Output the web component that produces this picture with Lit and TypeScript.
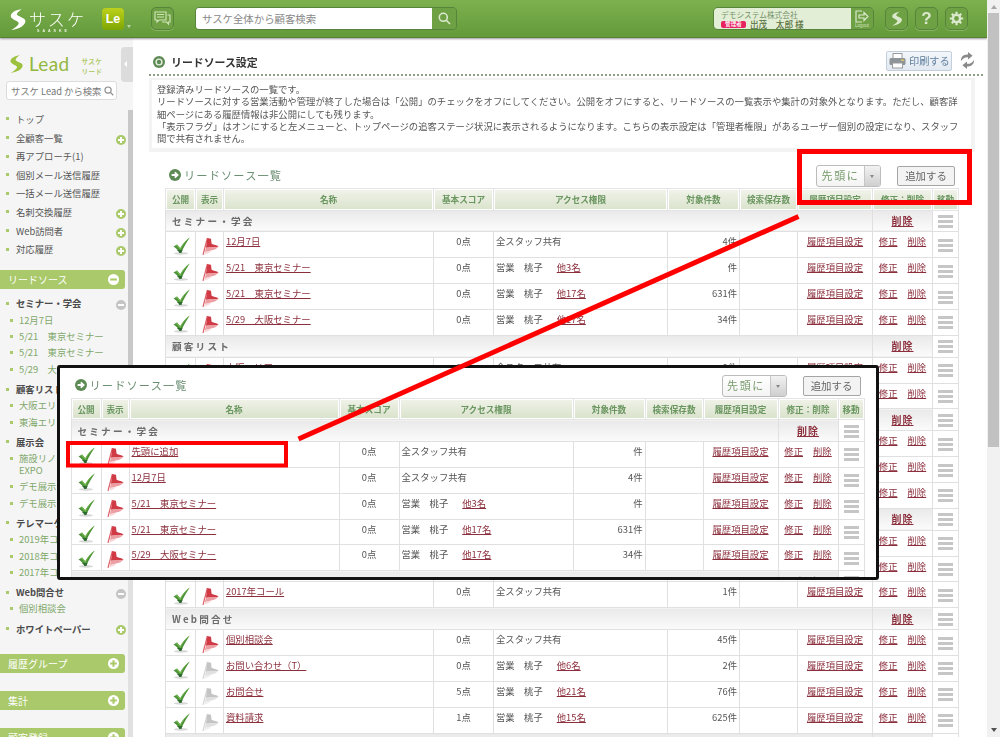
import { LitElement, html, svg, css, nothing } from "lit";
import { customElement, property } from "lit/decorators.js";

const FONT = css`"Noto Sans CJK JP", "Liberation Sans", sans-serif`;

type Row = { name: string; score: string; staff: string; more?: string; count: string; off?: boolean };
type Group = { title: string; rows: Row[] };

const ALL = "全スタッフ共有";
const SALES = "営業　桃子";

const seminar: Row[] = [
  { name: "12月7日", score: "0点", staff: ALL, count: "4件" },
  { name: "5/21　東京セミナー", score: "0点", staff: SALES, more: "他3名", count: "件" },
  { name: "5/21　東京セミナー", score: "0点", staff: SALES, more: "他17名", count: "631件" },
  { name: "5/29　大阪セミナー", score: "0点", staff: SALES, more: "他17名", count: "34件" },
];

const MAIN_GROUPS: Group[] = [
  { title: "セミナー・学会", rows: seminar },
  {
    title: "顧客リスト",
    rows: [
      { name: "大阪エリア", score: "0点", staff: ALL, count: "0件" },
      { name: "東海エリア", score: "0点", staff: ALL, count: "0件" },
    ],
  },
  {
    title: "展示会",
    rows: [
      { name: "施設リノベーションEXPO", score: "0点", staff: ALL, count: "0件" },
      { name: "デモ展示会", score: "0点", staff: ALL, count: "0件" },
      { name: "デモ展示会", score: "0点", staff: ALL, count: "0件" },
    ],
  },
  {
    title: "テレマーケティング",
    rows: [
      { name: "2019年コール", score: "0点", staff: ALL, count: "0件" },
      { name: "2018年コール", score: "0点", staff: ALL, count: "0件" },
      { name: "2017年コール", score: "0点", staff: ALL, count: "1件" },
    ],
  },
  {
    title: "Web問合せ",
    rows: [
      { name: "個別相談会", score: "0点", staff: ALL, count: "45件" },
      { name: "お問い合わせ（T）", score: "0点", staff: SALES, more: "他6名", count: "2件", off: true },
      { name: "お問合せ", score: "5点", staff: SALES, more: "他21名", count: "76件", off: true },
      { name: "資料請求", score: "1点", staff: SALES, more: "他15名", count: "625件", off: true },
    ],
  },
  { title: "ホワイトペーパー", rows: [] },
];

const INSET_GROUPS: Group[] = [
  {
    title: "セミナー・学会",
    rows: [{ name: "先頭に追加", score: "0点", staff: ALL, count: "件" }, ...seminar],
  },
  { title: "顧客リスト", rows: [] },
];

const checkIcon = html`<svg class="check" width="18" height="18" viewBox="0 0 18 18">
  <ellipse cx="8" cy="16.4" rx="7" ry="1.3" fill="#c6c6c6" opacity=".7"></ellipse>
  <path d="M0.5 9.5 L4 7.6 L7.3 11.2 C9.5 7.3 12.6 3.4 16.8 0.6 C13.4 5.4 10.6 10.4 8.2 16 L6.6 16 C5 13.2 3 11.2 0.5 9.5 Z" fill="#4c9139"></path>
  <path d="M3 8.4 L4 7.6 L7.3 11.2 C9.5 7.3 12.6 3.4 16.8 0.6 C13 4 10 8 7.4 13 Z" fill="#74b84f"></path>
  <path d="M3.6 13 C5 13.6 6 14.6 6.6 16 L8.2 16 C8.6 15 9 14 9.5 13 Z" fill="#2c6a30"></path>
</svg>`;

const flag = (off?: boolean) => {
  const a = off ? "#c4c4c4" : "#cf3a44";
  const b = off ? "#e0e0e0" : "#ec9ea3";
  const c = off ? "#efefef" : "#f8dadb";
  return html`<svg class="flag" width="18" height="19" viewBox="0 0 18 19">
    <path d="M5.4 1 L1 17.8" stroke="${off ? "#d4d4d4" : "#dc5c64"}" stroke-width="1.2" fill="none"></path>
    <path d="M5.4 1 C6.8 1.5 8.2 1.2 9 2 L9.6 6.8 C11.8 7.8 14.6 8 16.6 9.6 C14 10.4 10.6 10.8 7.4 10.4 L3.9 10.8 Z" fill="${a}"></path>
    <path d="M3.9 10.8 L7.4 10.4 C10.6 10.8 14 10.4 16.6 9.6 C15 12 12 13 9 13.4 C7 14.4 4.6 14.6 2.9 15 Z" fill="${b}"></path>
    <path d="M2.9 15 C5 14.6 7 14.4 9 13.4 C9 15 6 16.6 2.2 17.4 Z" fill="${c}"></path>
  </svg>`;
};

const handleIcon = html`<span class="handle"><i></i><i></i><i></i></span>`;

@customElement("lead-list")
class LeadList extends LitElement {
  @property({ type: Array }) groups: Group[] = [];

  static styles = css`
    :host { display: block; width: 793px; font: 9.35px/12px ${FONT}; color: #555; }
    .head { display: flex; align-items: center; height: 24px; }
    .arrow { width: 12px; height: 12px; margin: -2px 0 0 4px; flex: none; }
    .title { margin: -2px 0 0 3px; font-size: 11.2px; letter-spacing: 1.15px; color: #6b8f72; white-space: nowrap; }
    .select { margin-left: auto; display: flex; width: 65px; height: 22px; box-sizing: border-box;
      border: 1px solid #bcbcbc; border-radius: 3px; background: linear-gradient(#fff, #f4f4f4); overflow: hidden; }
    .select b { flex: 1; font-weight: 400; font-size: 11px; letter-spacing: 1.6px; line-height: 19px; text-align: center; color: #769a6a; }
    .select span { width: 15px; background: linear-gradient(#f2f2f2, #cfcfcf); border-left: 1px solid #c6c6c6; position: relative; }
    .select span::after { content: ""; position: absolute; left: 5px; top: 9px; border: 2.5px solid transparent; border-top: 3.5px solid #888; }
    .add { margin-left: 16px; margin-right: 3px; width: 58px; height: 20px; box-sizing: border-box; border: 1px solid #a5a5a5;
      border-radius: 2px; background: #f3f3f3; text-align: center; line-height: 18px; font-size: 10.4px; color: #666; }
    table { border-collapse: collapse; table-layout: fixed; width: 793px; }
    th { height: 21.6px; padding: 0; font-size: 8.6px; font-weight: 700; color: #6a9660; text-align: center; box-sizing: border-box;
      border: 1px solid #e4e4e4; box-shadow: inset 0 0 0 1px #fff;
      background: linear-gradient(#f1f3ea, #d9e2cb); }
    td { border: 1px solid #e0e0e0; padding: 0; box-sizing: border-box; vertical-align: top; background: #fff; }
    .row td { height: 25.85px; padding-top: 3px; line-height: 12px; }
    .row .ic { padding: 5px 0 0 2px; text-align: center; }
    .ic svg { display: block; margin: 0 auto; }
    .row .name { padding-left: 2px; white-space: nowrap; overflow: hidden; }
    .score { text-align: center; }
    .row .staff { padding-left: 2px; white-space: nowrap; }
    .staff a { margin-left: 14px; }
    .row .count { text-align: right; padding-right: 2px; }
    .row .mid { text-align: center; }
    .row .ops { text-align: center; white-space: nowrap; }
    .ops a + a { margin-left: 10px; }
    a { color: #8c2f3c; text-decoration: underline; }
    .grp td { height: 21.9px; background: linear-gradient(#e9e9e9, #fbfbfb); vertical-align: middle; }
    .grp .gt { padding-left: 6px; font-size: 9.6px; font-weight: 700; letter-spacing: 2.2px; color: #6b6b6b; border-right: none; }
    .grp .gd { text-align: center; font-size: 10px; font-weight: 700; letter-spacing: 1px; }
    .grp .gm, .row .gm { background: #fff; padding: 0; vertical-align: middle; text-align: center; }
    .handle { display: inline-flex; flex-direction: column; gap: 2px; width: 15px; vertical-align: middle; }
    .handle i { display: block; height: 3px; background: #c6c6c6; }
  `;

  render() {
    return html`
      <div class="head">
        <svg class="arrow" viewBox="0 0 12 12">
          <circle cx="6" cy="6" r="6" fill="#5e8b55"></circle>
          <path d="M2.6 6 H8 M5.8 3.4 L8.6 6 L5.8 8.6" stroke="#fff" stroke-width="1.8" fill="none"></path>
        </svg>
        <span class="title">リードソース一覧</span>
        <div class="select"><b>先頭に</b><span></span></div>
        <div class="add">追加する</div>
      </div>
      <table>
        <colgroup>
          <col style="width:30px" /><col style="width:28px" /><col style="width:210px" /><col style="width:60px" />
          <col style="width:174px" /><col style="width:72px" /><col style="width:58px" /><col style="width:75px" />
          <col style="width:60px" /><col style="width:26px" />
        </colgroup>
        <thead>
          <tr>
            <th>公開</th><th>表示</th><th>名称</th><th>基本スコア</th><th>アクセス権限</th>
            <th>対象件数</th><th>検索保存数</th><th>履歴項目設定</th><th>修正：削除</th><th>移動</th>
          </tr>
        </thead>
        <tbody>
          ${this.groups.map(
            (g) => html`
              <tr class="grp">
                <td class="gt" colspan="8">${g.title}</td>
                <td class="gd"><a>削除</a></td>
                <td class="gm">${handleIcon}</td>
              </tr>
              ${g.rows.map(
                (r) => html`
                  <tr class="row">
                    <td class="ic">${checkIcon}</td>
                    <td class="ic">${flag(r.off)}</td>
                    <td class="name"><a>${r.name}</a></td>
                    <td class="score">${r.score}</td>
                    <td class="staff">${r.staff}${r.more ? html`<a>${r.more}</a>` : nothing}</td>
                    <td class="count">${r.count}</td>
                    <td></td>
                    <td class="mid"><a>履歴項目設定</a></td>
                    <td class="ops"><a>修正</a><a>削除</a></td>
                    <td class="gm">${handleIcon}</td>
                  </tr>
                `
              )}
            `
          )}
        </tbody>
      </table>
    `;
  }
}

type Nav = { label: string; icon?: "plus" | "minus"; kids?: string[] };

const TOP_NAV: Nav[] = [
  { label: "トップ" },
  { label: "全顧客一覧", icon: "plus" },
  { label: "再アプローチ(1)" },
  { label: "個別メール送信履歴" },
  { label: "一括メール送信履歴" },
  { label: "名刺交換履歴", icon: "plus" },
  { label: "Web訪問者", icon: "plus" },
  { label: "対応履歴", icon: "plus" },
];

const LEAD_NAV: Nav[] = [
  { label: "セミナー・学会", icon: "minus", kids: ["12月7日", "5/21　東京セミナー", "5/21　東京セミナー", "5/29　大阪セミナー"] },
  { label: "顧客リスト", kids: ["大阪エリア", "東海エリア"] },
  { label: "展示会", kids: ["施設リノベーション EXPO", "デモ展示会", "デモ展示会"] },
  { label: "テレマーケティング", kids: ["2019年コール", "2018年コール", "2017年コール"] },
  { label: "Web問合せ", icon: "minus", kids: ["個別相談会"] },
  { label: "ホワイトペーパー", icon: "plus" },
];

const sign = (kind: "plus" | "minus", fill: string, mark: string, size = 10) => html`<svg
  class="sign" width="${size}" height="${size}" viewBox="0 0 10 10">
  <circle cx="5" cy="5" r="5" fill="${fill}"></circle>
  <path d="${kind === "plus" ? "M2 5 H8 M5 2 V8" : "M2 5 H8"}" stroke="${mark}" stroke-width="1.9"></path>
</svg>`;

const swoosh = (fill: string) => svg`<path
  d="M13 0 C7 1 2.5 3 1.8 6.6 C1.2 10 7.4 11.4 9.4 13.4 C10.6 14.8 7 18.6 2 21 C9 20.4 16 17 16.4 12.2 C16.6 8.8 9.4 7.8 8 5.8 C7.4 4.4 9.6 2.2 13 0 Z"
  fill="${fill}"></path>`;

@customElement("app-root")
class AppRoot extends LitElement {
  static styles = css`
    :host { display: block; position: relative; width: 1000px; height: 737px; overflow: hidden; font: 9.35px/12px ${FONT}; color: #555; background: #fff; }
    * { box-sizing: border-box; }
    .shell { display: flex; height: 737px; filter: blur(.3px); }
    .page { width: 987px; flex: none; display: flex; flex-direction: column; height: 737px; overflow: hidden; }
    .scroll { flex: 1; background: #f1f1f1; display: flex; flex-direction: column; align-items: center; padding-top: 3px; }
    .scroll .up { border: 3.5px solid transparent; border-bottom: 4px solid #a6a6a6; border-top: 0; margin-top: 2px; }
    .scroll .thumb { width: 11px; height: 434px; margin-top: 4px; background: #c1c1c1; }
    .scroll .down { border: 3.5px solid transparent; border-top: 4px solid #505050; border-bottom: 0; margin-top: auto; margin-bottom: 5px; }

    header { height: 38px; flex: none; display: flex; align-items: flex-start; padding-top: 7px; position: relative;
      background: linear-gradient(#7db04f, #649a3a); border-bottom: 1px solid #577f38; box-shadow: 0 1px 2px #9b9b9b; z-index: 2; }
    .logo { width: 102px; height: 30px; position: relative; flex: none; padding-left: 9px; display: flex; }
    .logo svg { margin-top: 2px; }
    .logo b { position: absolute; left: 29px; top: 0; font-weight: 300; font-size: 17px; line-height: 24px; letter-spacing: 2.2px; color: #fff; }
    .logo i { position: absolute; left: 37px; top: 22px; font: 700 3.6px/5px "Liberation Sans", sans-serif; letter-spacing: 3px; color: #eef5e4; }
    .le { width: 22px; height: 22px; margin-top: 1px; border-radius: 4px; background: linear-gradient(#bdd11c, #7da602); color: #fff; font: 700 12.5px/22px "Liberation Sans", sans-serif; text-align: center; flex: none; }
    .caret { width: 0; height: 0; margin: 18px 0 0 3px; border: 2.5px solid transparent; border-top: 3px solid #bcd6a0; flex: none; }
    .hbtn { width: 23px; height: 23px; border: 1px solid #55843a; border-radius: 5px; background: #6ea044; display: flex; align-items: center; justify-content: center; flex: none; box-shadow: 0 1px 0 #86b461; }
    .chat { margin-left: 20px; }
    .search { margin-left: 21px; width: 262px; height: 23px; display: flex; border-radius: 4px; border: 1px solid #55843a; overflow: hidden; flex: none; }
    .search span { width: 236px; background: #fff; font-size: 10.4px; line-height: 21px; padding-left: 6px; color: #888; }
    .search div { flex: 1; background: #6ea044; display: flex; align-items: center; justify-content: center; }
    .user { margin-left: auto; width: 161px; height: 23px; display: flex; border: 1px solid #55843a; border-radius: 5px; overflow: hidden; flex: none; }
    .ubox { width: 137px; background: #e3eed6; padding: 2px 0 0 7px; font-size: 7.7px; line-height: 9px; color: #76936a; white-space: nowrap; }
    .uname { display: flex; align-items: center; font-size: 8.6px; font-weight: 500; color: #5a7340; margin-top: 1px; }
    .badge { width: 25px; height: 7px; background: #e8225f; border-radius: 2px; color: #fff; font-size: 5.6px; line-height: 7px; text-align: center; margin-right: 4px; }
    .logout { flex: 1; background: #6ea044; display: flex; flex-direction: column; align-items: center; color: #cfe3bb; font: 4.6px/5px "Liberation Sans", sans-serif; padding-top: 2px; }
    .tools { margin-left: 11px; margin-right: 19px; display: flex; gap: 7px; }
    .q { color: #dbe9cd; font: 700 17px/21px "Liberation Sans", sans-serif; }

    .body { flex: 1; display: flex; min-height: 0; }
    aside { width: 133px; flex: none; display: flex; background: #f5f5f5; position: relative; }
    .tab { position: absolute; left: 121px; top: 9px; width: 12px; height: 35px; background: #dcdcdc; border-radius: 4px 0 0 4px; }
    .tab::after { content: ""; position: absolute; left: 3px; top: 14px; border: 3px solid transparent; border-right: 3px solid #fff; border-left: 0; }
    .strip { width: 5px; flex: none; margin-top: 72px; background: linear-gradient(#c8c8c8 0 60%, #e1e1e1 60%); }
    .side { flex: 1; min-width: 0; white-space: nowrap; }
    .brand { height: 43px; padding: 17px 0 0 9px; display: flex; position: relative; }
    .brand b { font: 400 19px/22px "Lato", "Liberation Sans", sans-serif; color: #93b83e; margin-left: 5px; margin-top: -2px; letter-spacing: .3px; }
    .brand small { font-size: 6.6px; line-height: 10px; font-weight: 700; color: #b4cc70; margin-left: 12px; margin-top: 1px; text-align: center; letter-spacing: .4px; }
    .sbox { margin-left: 6px; width: 111px; height: 19px; background: #fff; border: 1px solid #dcdcdc; border-radius: 3px; display: flex; align-items: center; padding: 0 2px 0 4px; font-size: 9.35px; color: #777; }
    .sbox svg { margin-left: auto; flex: none; }
    nav { margin-top: 9.7px; }
    .it { height: 18.6px; display: flex; align-items: center; padding-left: 6px; padding-right: 2px; color: #555; }
    .it::before, .kid::before { content: ""; width: 3px; height: 3px; background: #a9c96a; flex: none; margin-right: 7px; }
    .sign { margin-left: auto; margin-top: 4px; flex: none; }
    .bar { width: 125px; height: 19px; background: #a9c96a; border-radius: 0 3px 3px 0; display: flex; align-items: center; padding: 0 6px 0 8px; color: #fff; font-size: 10px; }
    .bar .sign { margin-top: 0; }
    .bar.first { margin-top: 12px; }
    .bar.next { margin-top: 18px; }
    .lead { padding-top: 6px; padding-bottom: 13.5px; }
    .grp { margin-bottom: 4px; }
    .grp .it { height: 16px; font-weight: 700; color: #4a4a4a; }
    .grp .it .sign { margin-top: 3px; }
    .kid { min-height: 16.4px; display: flex; align-items: center; padding: 2.2px 0 2.2px 10px; color: #7fa86a; white-space: normal; line-height: 12px; }
    .kid::before { margin-right: 6px; align-self: flex-start; margin-top: 5px; }

    main { flex: 1; min-width: 0; padding: 0 4px 0 16px; overflow: hidden; }
    .ptitle { height: 38px; display: flex; align-items: center; padding: 12px 0 0 4px; border-bottom: 2px dotted #8da083; }
    .ptitle svg.dot { flex: none; }
    .ptitle b { font-size: 10.9px; font-weight: 700; color: #333; margin-left: 6px; }
    .print { margin-left: auto; width: 66px; height: 20px; margin-top: -3px; border: 1px solid #c3cfdb; border-radius: 2px; background: linear-gradient(#f3f7fb, #e2e9f1); display: flex; align-items: center; padding-left: 2px; font-size: 10.2px; color: #5f7f9d; white-space: nowrap; }
    .print svg { flex: none; margin-right: 3px; }
    .refresh { margin: -3px 8px 0 8px; flex: none; }
    .note { width: 826px; margin-top: 2px; padding: 2px 4px 4px 3px; background: #f3f3f3; }
    .note div { background: #fff; padding: 3px 4px 3px 5px; line-height: 12.35px; font-size: 9.35px; color: #555; white-space: nowrap; height: 68px; }
    .listwrap { margin: 12px 0 0 16px; }

    .inset { position: absolute; left: 57px; top: 365px; width: 822px; height: 215px; background: #fff; border: 3px solid #111; border-radius: 3px; overflow: hidden; padding: 5.5px 0 0 10.5px; filter: blur(.3px); }
    .marks { position: absolute; left: 0; top: 0; pointer-events: none; }
  `;

  render() {
    return html`
      <div class="shell">
        <div class="page">
          <header>
            <div class="logo">
              <svg width="18" height="22" viewBox="0 0 18 22">${swoosh("#fff")}</svg>
              <b>サスケ</b><i>SAASKE</i>
            </div>
            <div class="le">Le</div>
            <span class="caret"></span>
            <div class="hbtn chat">
              <svg width="17" height="15" viewBox="0 0 17 15" fill="none" stroke="#cfe3b5" stroke-width="1.2">
                <path d="M1 1 H12 V9 H5 L3 11 V9 H1 Z"></path>
                <path d="M3 3.5 H10 M3 6 H10"></path>
                <path d="M13.5 4 H16 V11 H14.5 V13 L12.5 11 H8"></path>
              </svg>
            </div>
            <div class="search">
              <span>サスケ全体から顧客検索</span>
              <div>
                <svg width="13" height="13" viewBox="0 0 13 13" fill="none" stroke="#dbe9cd" stroke-width="1.6">
                  <circle cx="5.3" cy="5.3" r="4"></circle><path d="M8.3 8.3 L12 12"></path>
                </svg>
              </div>
            </div>
            <div class="user">
              <div class="ubox">
                デモシステム株式会社
                <div class="uname"><span class="badge">管理者</span>出茂　太郎 様</div>
              </div>
              <div class="logout">
                <svg width="14" height="13" viewBox="0 0 14 13" fill="none" stroke="#dbe9cd" stroke-width="1.2">
                  <path d="M7 1 H1 V12 H7"></path><path d="M4 5 H9 V2.5 L13 6.5 L9 10.5 V8 H4 Z"></path>
                </svg>
                Logout
              </div>
            </div>
            <div class="tools">
              <div class="hbtn"><svg width="12" height="16" viewBox="0 0 18 22">${swoosh("#dbe9cd")}</svg></div>
              <div class="hbtn"><span class="q">?</span></div>
              <div class="hbtn">
                <svg width="15" height="15" viewBox="0 0 15 15">
                  <circle cx="7.5" cy="7.5" r="3.6" fill="none" stroke="#dbe9cd" stroke-width="2.4"></circle>
                  <path d="M7.5 0.8 V3 M7.5 12 V14.2 M0.8 7.5 H3 M12 7.5 H14.2 M2.8 2.8 L4.4 4.4 M10.6 10.6 L12.2 12.2 M2.8 12.2 L4.4 10.6 M10.6 4.4 L12.2 2.8" stroke="#dbe9cd" stroke-width="2.2"></path>
                </svg>
              </div>
            </div>
          </header>
          <div class="body">
            <aside>
              <div class="side">
                <div class="brand">
                  <svg width="15" height="19" viewBox="0 0 18 22">${swoosh("#9cc13f")}</svg>
                  <b>Lead</b>
                  <small>サスケ<br />リード</small>
                </div>
                <div class="sbox">
                  サスケ Lead から検索
                  <svg width="10" height="10" viewBox="0 0 13 13" fill="none" stroke="#888" stroke-width="1.5">
                    <circle cx="5.3" cy="5.3" r="4"></circle><path d="M8.3 8.3 L12 12"></path>
                  </svg>
                </div>
                <nav>
                  ${TOP_NAV.map((n) => html`<div class="it">${n.label}${n.icon ? sign(n.icon, "#a9c96a", "#fff") : nothing}</div>`)}
                </nav>
                <div class="bar first">リードソース${sign("minus", "#fff", "#a9c96a", 11)}</div>
                <div class="lead">
                  ${LEAD_NAV.map(
                    (n) => html`<div class="grp">
                      <div class="it">${n.label}${n.icon
                        ? sign(n.icon, n.icon === "minus" ? "#c4c4c4" : "#a9c96a", "#fff")
                        : nothing}</div>
                      ${(n.kids ?? []).map((k) => html`<div class="kid"><span>${k}</span></div>`)}
                    </div>`
                  )}
                </div>
                <div class="bar">履歴グループ${sign("plus", "#fff", "#a9c96a", 11)}</div>
                <div class="bar next">集計${sign("plus", "#fff", "#a9c96a", 11)}</div>
                <div class="bar next">顧客登録${sign("plus", "#fff", "#a9c96a", 11)}</div>
              </div>
              <div class="strip"></div>
              <div class="tab"></div>
            </aside>
            <main>
              <div class="ptitle">
                <svg class="dot" width="12" height="12" viewBox="0 0 12 12">
                  <circle cx="6" cy="6" r="6" fill="#5e8b55"></circle>
                  <circle cx="6" cy="6" r="3.6" fill="#e8f0e2"></circle>
                  <circle cx="6" cy="6" r="2.2" fill="#5e8b55"></circle>
                </svg>
                <b>リードソース設定</b>
                <div class="print">
                  <svg width="17" height="16" viewBox="0 0 17 16">
                    <rect x="4" y="0.5" width="9" height="5" fill="#fff" stroke="#9a9a9a"></rect>
                    <rect x="0.5" y="5" width="16" height="7" rx="1.5" fill="#8f9498"></rect>
                    <rect x="3.5" y="10" width="10" height="5" fill="#fff" stroke="#9a9a9a"></rect>
                    <rect x="12" y="6.5" width="3" height="1.4" fill="#e2c75a"></rect>
                  </svg>
                  印刷する
                </div>
                <svg class="refresh" width="15" height="17" viewBox="0 0 15 17" fill="#8a8a8a">
                  <path d="M1 9 C0.6 5 4 2 8 2.6 L8 0 L12.6 3.8 L8 7.6 L8 5.2 C5.4 4.8 3 6 1 9 Z"></path>
                  <path d="M14 8 C14.4 12 11 15 7 14.4 L7 17 L2.4 13.2 L7 9.4 L7 11.8 C9.6 12.2 12 11 14 8 Z"></path>
                </svg>
              </div>
              <div class="note">
                <div>
                  登録済みリードソースの一覧です。<br />
                  リードソースに対する営業活動や管理が終了した場合は「公開」のチェックをオフにしてください。公開をオフにすると、リードソースの一覧表示や集計の対象外となります。ただし、顧客詳<br />
                  細ページにある履歴情報は非公開にしても残ります。<br />
                  「表示フラグ」はオンにすると左メニューと、トップページの追客ステージ状況に表示されるようになります。こちらの表示設定は「管理者権限」があるユーザー個別の設定になり、スタッフ<br />
                  間で共有されません。
                </div>
              </div>
              <div class="listwrap"><lead-list .groups=${MAIN_GROUPS}></lead-list></div>
            </main>
          </div>
        </div>
        <div class="scroll">
          <span class="up"></span>
          <div class="thumb"></div>
          <span class="down"></span>
        </div>
      </div>
      <div class="inset"><lead-list .groups=${INSET_GROUPS}></lead-list></div>
      <svg class="marks" width="1000" height="737" viewBox="0 0 1000 737" fill="none" stroke="#f00">
        <rect x="799.5" y="151.5" width="170" height="51" stroke-width="5"></rect>
        <rect x="68" y="443" width="218" height="22.5" stroke-width="4"></rect>
        <path d="M298.5 439 L798.5 216.5" stroke-width="5"></path>
      </svg>
    `;
  }
}
